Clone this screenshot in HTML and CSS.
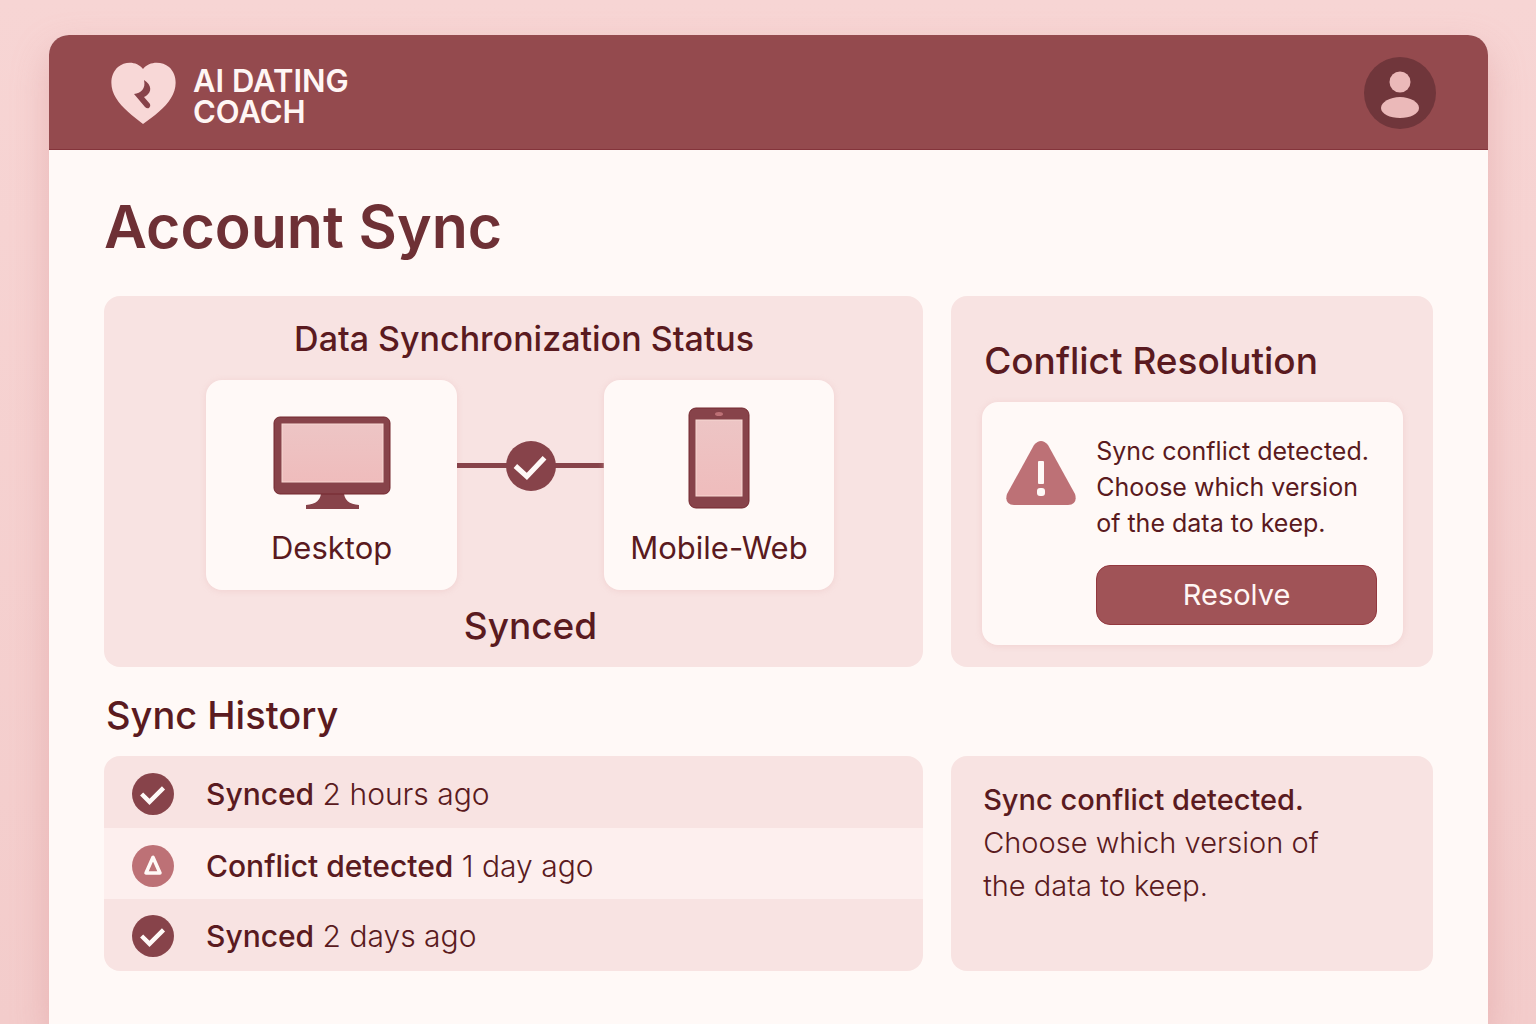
FILE: index.html
```html
<!DOCTYPE html>
<html lang="en">
<head>
<meta charset="utf-8">
<meta name="viewport" content="width=device-width, initial-scale=1">
<title>Account Sync – AI Dating Coach</title>
<link rel="stylesheet" href="styles.css">
</head>
<body>
<div class="app">
  <header class="topbar">
    <a class="brand" href="#">
      <svg class="brand-mark" viewBox="0 0 66 62" aria-hidden="true">
        <path class="heart" d="M32 7C26 -1 14 -1 7 5C-2 13 -1 27 5 36C11 46 22 54 32 62C43 54 54 46 60 36C66 27 67 13 58 5C51 -1 38 -1 32 7Z"/>
        <path class="heart-cut" d="M33 18C41 23 41 30 35 34L33 35L39 42Q40 44 38 46Q36 47 34 45L23 32C30 31 35 27 33 18Z"/>
      </svg>
      <span class="brand-name">AI DATING<br>COACH</span>
    </a>
    <button class="avatar" type="button" aria-label="Account">
      <svg viewBox="0 0 72 72" aria-hidden="true">
        <circle cx="36" cy="25" r="10.500"/>
        <path d="M17 51C17 45 26 40 36 40S55 45 55 51S46 61 36 61S17 57 17 51Z"/>
      </svg>
    </button>
  </header>

  <main class="content">
    <h1 class="page-title">Account Sync</h1>
    <div class="board">
      <section class="panel status">
        <h2 class="status-title">Data Synchronization Status</h2>
        <div class="devices">
          <div class="device">
            <svg class="device-icon" width="118" height="104" viewBox="0 0 118 104" aria-hidden="true">
              <defs>
                <linearGradient id="screen" x1="0" y1="0" x2="0" y2="1">
                  <stop offset="0" stop-color="#edc5c5"/><stop offset="1" stop-color="#efbcbc"/>
                </linearGradient>
              </defs>
              <path class="dark" d="M48 86H71Q71 98 86 99V103H33V99Q48 98 48 86Z"/>
              <rect class="shell" x="1" y="11" width="116" height="77" rx="6"/>
              <rect class="screen" x="9" y="18" width="101" height="58"/>
            </svg>
            <span class="device-name">Desktop</span>
          </div>
          <div class="link">
            <svg class="badge" viewBox="0 0 48 48" aria-hidden="true">
              <circle class="dark" cx="24" cy="24" r="24"/>
              <path class="tick" d="M9 24L20 34L37 16"/>
            </svg>
          </div>
          <div class="device">
            <svg class="device-icon" width="62" height="104" viewBox="0 0 62 104" aria-hidden="true">
              <rect class="shell" x="1" y="2" width="60" height="100" rx="7"/>
              <rect class="screen" x="8" y="14" width="46" height="76"/>
              <ellipse class="soft" cx="31" cy="8" rx="4" ry="2"/>
            </svg>
            <span class="device-name">Mobile-Web</span>
          </div>
          <p class="state">Synced</p>
        </div>
      </section>

      <section class="panel conflict">
        <h2 class="conflict-title">Conflict Resolution</h2>
        <div class="alert">
          <svg class="alert-icon" viewBox="0 0 70 66" aria-hidden="true">
            <path class="soft" d="M28 5Q35 -3 42 5L69 54Q72 64 62 65H8Q-2 64 1 54Z"/>
            <rect class="light" x="32" y="21" width="6" height="23" rx="1"/>
            <rect class="light" x="31" y="48" width="8" height="8" rx="3"/>
          </svg>
          <div class="alert-body">
            <p class="alert-text">Sync conflict detected. Choose which version of&nbsp;the data to keep.</p>
            <button class="resolve" type="button">Resolve</button>
          </div>
        </div>
      </section>

      <h2 class="history-title">Sync History</h2>

      <ul class="history">
        <li class="entry">
          <svg class="entry-icon" viewBox="0 0 48 48" aria-hidden="true"><circle class="dark" cx="24" cy="24" r="24"/><path class="tick" d="M11 24L20 33L36 17"/></svg>
          <span><strong>Synced</strong> 2 hours ago</span>
        </li>
        <li class="entry entry-warn">
          <svg class="entry-icon" viewBox="0 0 48 48" aria-hidden="true"><circle class="soft" cx="24" cy="24" r="24"/><path class="delta" d="M24 14L16 32H32Z"/></svg>
          <span><strong>Conflict detected</strong> 1 day ago</span>
        </li>
        <li class="entry">
          <svg class="entry-icon" viewBox="0 0 48 48" aria-hidden="true"><circle class="dark" cx="24" cy="24" r="24"/><path class="tick" d="M11 24L20 33L36 17"/></svg>
          <span><strong>Synced</strong> 2 days ago</span>
        </li>
      </ul>

      <aside class="panel note">
        <p><strong>Sync conflict detected.</strong><br>Choose which version of the data to keep.</p>
      </aside>
    </div>
  </main>
</div>
</body>
</html>
```
FILE: styles.css
```css
:root {
  --wine: #944a4e;
  --wine-dark: #87434a;
  --rose: #bd7176;
  --blush: #f8e3e2;
  --paper: #fff9f7;
  --ink: #5a1a20;
}

* { box-sizing: border-box; margin: 0; }

body {
  min-height: 100vh;
  display: flex;
  padding: 35px 48px 0 49px;
  background: linear-gradient(#f7d5d4, #f3cccb);
  color: var(--ink);
  font-family: Inter, "Liberation Sans", sans-serif;
}

.app {
  flex: 1;
  background: var(--paper);
  border-radius: 20px 20px 0 0;
  box-shadow: 0 16px 36px #d8898c66;
}

.topbar {
  display: flex;
  align-items: center;
  justify-content: space-between;
  height: 115px;
  padding: 1px 52px 0 62px;
  background: var(--wine);
  border-bottom: 1px solid #84343b;
  border-radius: 20px 20px 0 0;
}

.brand {
  display: flex;
  align-items: center;
  gap: 16px;
  color: #fff6f4;
  text-decoration: none;
}
.brand-mark { width: 66px; height: 62px; }
.heart { fill: #f8d8d7; }
.heart-cut { fill: var(--wine-dark); }
.brand-name {
  padding-top: 6px;
  font-size: 31px;
  line-height: 31px;
  font-weight: 600;
}

.avatar {
  width: 72px;
  height: 72px;
  padding: 0;
  border: 0;
  border-radius: 50%;
  background: #70363b;
  fill: #ebb9b9;
}
.avatar svg { display: block; }

.content { padding: 42px 55px 53px; }

.page-title {
  margin-bottom: 34px;
  color: #6e3035;
  font-size: 59px;
  line-height: 70px;
  font-weight: 600;
}

.board {
  display: grid;
  grid-template-columns: 17fr 10fr;
  column-gap: 28px;
}

h2 { font-weight: 500; }

.panel, .history {
  border-radius: 16px;
  background: var(--blush);
}

.status { padding: 22px 89px 18px 102px; }
.status-title {
  margin-bottom: 20px;
  padding-left: 8px;
  font-size: 34px;
  line-height: 42px;
  text-align: center;
  white-space: nowrap;
}

.devices {
  display: grid;
  grid-template-columns: 12fr 7fr 11fr;
}
.device {
  display: flex;
  flex-direction: column;
  align-items: center;
  gap: 18px;
  height: 210px;
  padding-top: 26px;
  border-radius: 16px;
  background: var(--paper);
  box-shadow: 0 1px 6px #e9b9b966;
}
.device-name { font-size: 31px; line-height: 40px; white-space: nowrap; }

.link {
  display: flex;
  align-items: center;
  justify-content: center;
  height: 171px;
  background: linear-gradient(var(--wine-dark), var(--wine-dark)) center / 100% 5px no-repeat;
}
.badge { width: 50px; height: 50px; }

.state {
  grid-column: 2;
  padding-top: 12px;
  font-size: 37px;
  line-height: 47px;
  font-weight: 500;
  text-align: center;
}

.dark { fill: var(--wine-dark); }
.soft { fill: var(--rose); }
.light { fill: var(--paper); }
.shell { fill: var(--wine-dark); stroke: #74282f; stroke-width: 1; }
.screen { fill: url(#screen); stroke: #f8d8d2; stroke-width: 1; }
.tick { fill: none; stroke: var(--paper); stroke-width: 5; }
.delta { fill: none; stroke: var(--paper); stroke-width: 4; stroke-linejoin: round; }

.conflict { padding: 42px 30px 22px 31px; }
.conflict-title {
  margin-bottom: 18px;
  padding-left: 2px;
  font-size: 37px;
  line-height: 46px;
}
.alert {
  display: flex;
  gap: 20px;
  padding: 31px 26px 20px 24px;
  border-radius: 16px;
  background: var(--paper);
  box-shadow: 0 1px 6px #e9b9b966;
}
.alert-icon { flex: none; width: 70px; height: 66px; margin-top: 7px; }
.alert-body { flex: 1; }
.alert-text { font-size: 25px; line-height: 36px; }
.resolve {
  display: block;
  width: 100%;
  height: 60px;
  margin-top: 24px;
  border: 1px solid #93383f;
  border-radius: 14px;
  background: #a05357;
  color: #fff6f4;
  font: 29px/40px Inter, "Liberation Sans", sans-serif;
}

.history-title {
  grid-column: 1 / -1;
  padding: 24px 0 16px 2px;
  font-size: 38px;
  line-height: 49px;
}

.history {
  padding: 0;
  list-style: none;
  overflow: hidden;
}
.entry {
  display: flex;
  align-items: center;
  gap: 32px;
  height: 72px;
  padding: 4px 28px 0;
  font-size: 30px;
  line-height: 40px;
  font-weight: 300;
}
.entry:last-child { padding-top: 2px; }
.entry-warn { height: 71px; background: #fdefee; }
.entry-icon { width: 42px; height: 42px; }
strong { font-weight: 500; }

.note {
  padding: 22px 80px 22px 32px;
  font-size: 29px;
  line-height: 43px;
  font-weight: 300;
}
```
